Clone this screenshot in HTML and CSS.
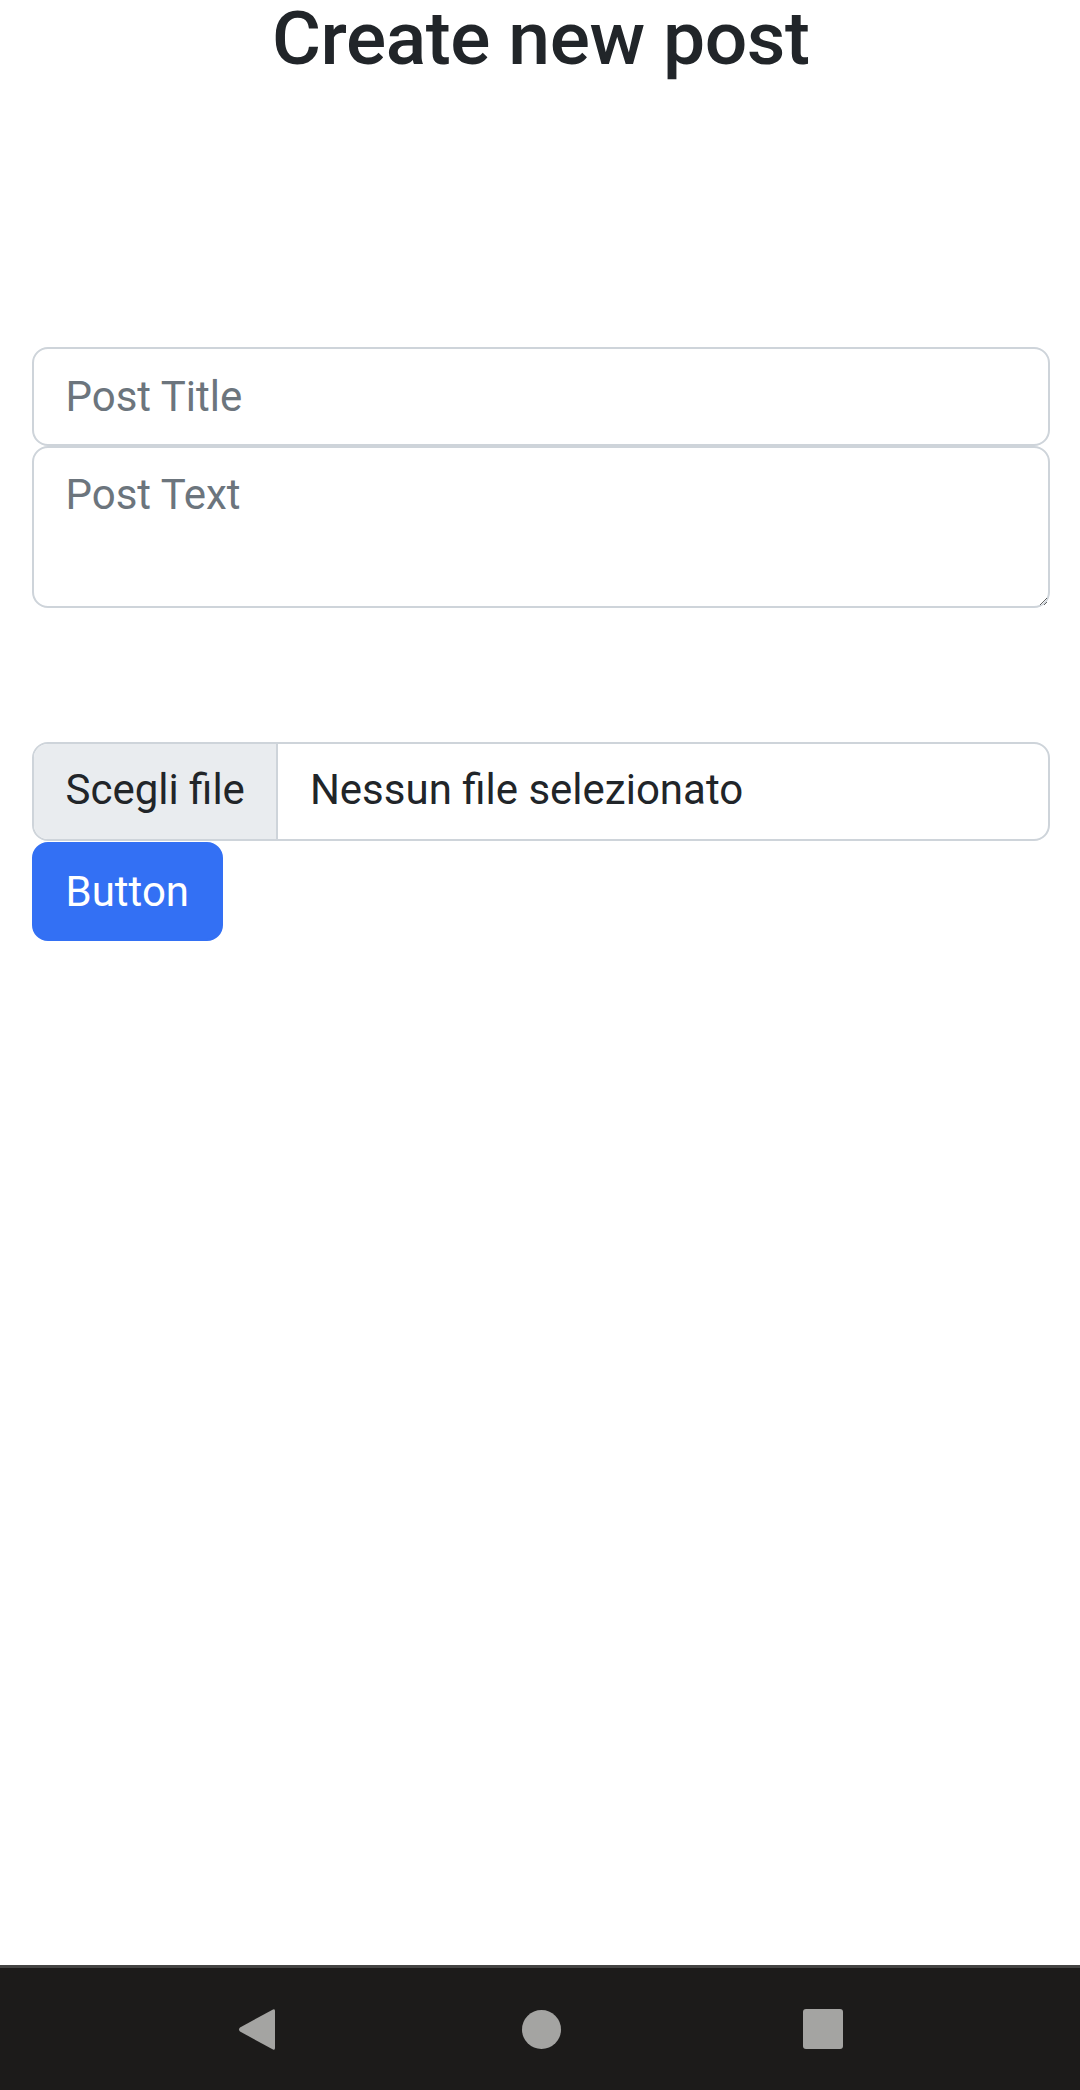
FILE: index.html
```html
<!DOCTYPE html>
<html lang="it">
<head>
<meta charset="utf-8">
<title>Create new post</title>
<link rel="stylesheet" href="styles.css">
</head>
<body>
<div class="screen">
  <main class="page">
    <h1 class="title">Create new post</h1>
    <form class="post-form">
      <input class="field" type="text" placeholder="Post Title">
      <textarea class="field field-area" rows="2" placeholder="Post Text"></textarea>
      <div class="file-input">
        <span class="file-btn">Scegli file</span>
        <span class="file-name">Nessun file selezionato</span>
      </div>
      <button class="btn" type="button">Button</button>
    </form>
  </main>
  <nav class="navbar">
    <svg class="nav-back" width="38" height="43" viewBox="0 0 38 43"><path d="M35 1.5 Q37 0.5 37 3 L37 40 Q37 42.5 35 41.5 L2 23.5 Q0 21.5 2 19.5 Z" fill="#a4a4a2"/></svg>
    <span class="nav-home"></span>
    <span class="nav-recent"></span>
  </nav>
</div>
</body>
</html>
```

FILE: styles.css
```css
html, body {
  margin: 0;
  padding: 0;
  background: #fff;
}

body {
  font-family: Roboto, "Noto Sans", "Liberation Sans", sans-serif;
  color: #212529;
}

.screen {
  height: 2090px;
  display: flex;
  flex-direction: column;
  overflow: hidden;
}

.page {
  flex: 1;
  padding: 0 30.5px 0 32px;
}

.title {
  margin: 0;
  padding-top: 1px;
  font-size: 75px;
  line-height: 75px;
  font-weight: 500;
  letter-spacing: -0.4px;
  text-align: center;
  color: #212529;
}

.post-form {
  margin-top: 271px;
  display: flex;
  flex-direction: column;
  align-items: flex-start;
}

.field {
  box-sizing: border-box;
  display: block;
  width: 100%;
  margin: 0;
  font-family: inherit;
  font-size: 42px;
  line-height: 63px;
  color: #212529;
  background: #fff;
  border: 2px solid #ced4da;
  border-radius: 16px;
  padding: 15.75px 31.5px;
  outline: none;
}

.field::placeholder {
  color: #6c757d;
  opacity: 1;
}

.field-area {
  height: 162.5px;
  resize: vertical;
}

.file-input {
  box-sizing: border-box;
  margin-top: 134px;
  width: 100%;
  height: 98.5px;
  display: flex;
  align-items: stretch;
  border: 2px solid #ced4da;
  border-radius: 16px;
  overflow: hidden;
  font-size: 42px;
  line-height: 63px;
}

.file-btn {
  display: flex;
  align-items: center;
  padding: 0 31.5px 4px;
  background: #e9ecef;
  border-right: 2px solid #ced4da;
  color: #212529;
}

.file-name {
  display: flex;
  align-items: center;
  padding: 0 0 4px 31.5px;
  color: #212529;
}

.btn {
  margin-top: 1.5px;
  font-family: inherit;
  font-size: 42px;
  line-height: 63px;
  color: #fff;
  background: #3370f4;
  border: 2px solid #3370f4;
  border-radius: 16px;
  padding: 15.75px 31.5px;
  cursor: pointer;
}

.navbar {
  flex: 0 0 auto;
  height: 122px;
  background: #1c1b1a;
  border-top: 3px solid #444443;
  display: flex;
  align-items: center;
  justify-content: center;
  gap: 242px;
}

.nav-back {
  display: block;
  margin-right: 4px;
}

.nav-home {
  display: block;
  width: 39px;
  height: 39px;
  border-radius: 50%;
  background: #a4a4a2;
}

.nav-recent {
  display: block;
  width: 40px;
  height: 40px;
  border-radius: 3px;
  background: #a4a4a2;
}
```
